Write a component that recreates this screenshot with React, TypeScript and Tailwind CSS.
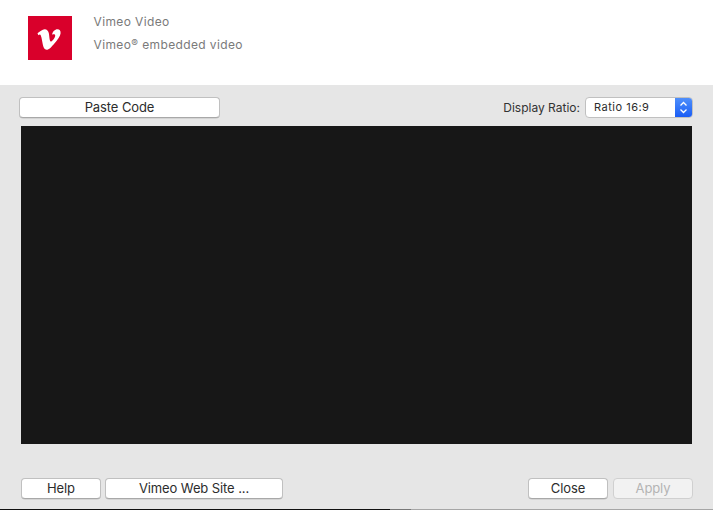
const Btn = ({ label, className, disabled }: { label: string; className: string; disabled?: boolean }) => (
  <button
    type="button"
    className={`${className} h-[21px] rounded-[4px] border text-[13px] leading-[19px] tracking-[-0.1px] ${
      disabled
        ? "border-[#d0d0d0] bg-[#f2f2f2] text-[#b4b4b4]"
        : "border-[#c0c0c0] border-b-[#a8a8a8] bg-white text-[#2c2c2c] shadow-[0_0.5px_0.5px_rgba(0,0,0,0.15)]"
    }`}
  >
    {label}
  </button>
);

const App = () => {
  return (
    <div className="flex h-[510px] w-[713px] flex-col overflow-hidden bg-[#e6e6e6] font-['Inter',sans-serif]">
      <div className="flex h-[85px] bg-white pl-[28px] pt-[16px]">
        <div className="flex h-[44px] w-[44px] items-center justify-center bg-[#d9002b]">
          <svg className="mr-[3px] mt-[3px]" width="24" height="21" viewBox="0 0 24 21">
            <path
              d="M0.5 4.2 C2.5 2.6 5.5 0.2 7.6 0.2 C10 0.2 11.4 1.8 11.9 4.6 C12.4 7.8 12.6 12.6 13.8 12.6 C15 12.6 18.2 8.8 18.2 6.8 C18.2 5.2 16.6 5 15 5.8 C15.6 2.4 18 0.2 20.4 0.2 C22.6 0.2 23.8 1.8 23.6 4.2 C23.4 7.2 20.6 10.8 17.4 14.4 C14.6 17.6 12 20.8 9.6 20.8 C7.4 20.8 6.4 18.6 5.8 15.6 C5.2 12.6 4.8 9 3.8 6.4 C3.4 5.4 2.6 5.4 1.4 6.2 Z"
              fill="#fff"
            />
          </svg>
        </div>
        <div className="ml-[21.5px] flex flex-col text-[12px] leading-[15px] tracking-[0.38px] text-[#7a7a7a]">
          <span className="mt-[-2px]">Vimeo Video</span>
          <span className="mt-[7px]">
            Vimeo<span className="text-[10px] align-[2px]">®</span> embedded video
          </span>
        </div>
      </div>
      <div className="flex h-[41px] items-start justify-between pl-[19px] pr-[20px] pt-[12px]">
        <Btn label="Paste Code" className="w-[201px]" />
        <div className="flex items-center">
          <span className="mr-[5px] text-[12px] text-[#333]">Display Ratio:</span>
          <div className="flex h-[21px] w-[108px] overflow-hidden rounded-[4px] border border-[#c0c0c0] bg-white">
            <span className="flex-1 pl-[8px] text-[11px] leading-[19px] tracking-[0.5px] text-[#2c2c2c]">Ratio 16:9</span>
            <div className="flex w-[17px] items-center justify-center bg-gradient-to-b from-[#4f8ffb] to-[#1a5cf5]">
              <svg width="9" height="13" viewBox="0 0 9 13" fill="none" stroke="#fff" strokeWidth="1.3">
                <path d="M1.5 4.5 4.5 1.5 7.5 4.5" />
                <path d="M1.5 8.5 4.5 11.5 7.5 8.5" />
              </svg>
            </div>
          </div>
        </div>
      </div>
      <div className="ml-[21px] h-[318px] w-[671px] shrink-0 bg-[#171717]" />
      <div className="flex flex-1 items-start pl-[21px] pr-[20px] pt-[34px]">
        <Btn label="Help" className="w-[80px]" />
        <Btn label="Vimeo Web Site ..." className="ml-[4px] w-[178px]" />
        <Btn label="Close" className="ml-auto w-[80px]" />
        <Btn label="Apply" className="ml-[5px] w-[80px]" disabled />
      </div>
      <div className="flex h-px shrink-0 bg-[#a6a6a6]">
        <div className="w-[390px] bg-[#111]" />
        <div className="w-[21px] bg-[#777]" />
      </div>
    </div>
  );
};

export default App;
